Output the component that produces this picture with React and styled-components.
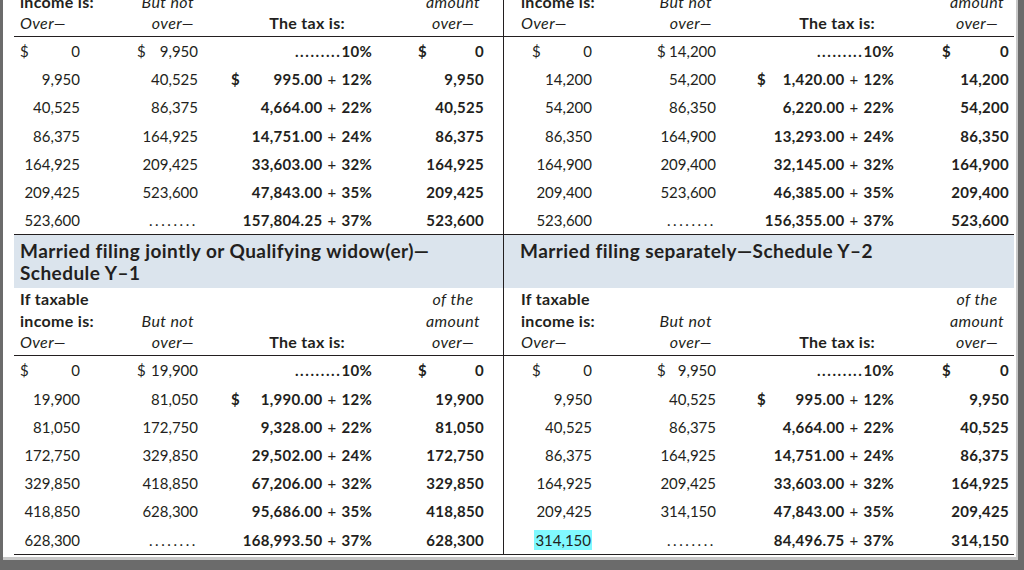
import styled, { createGlobalStyle } from "styled-components"

const GlobalStyle = createGlobalStyle`
  html, body {
    margin: 0;
    padding: 0;
    background: #6b6b6b;
    overflow: hidden;
  }
  body {
    font-family: Lato, "Open Sans", sans-serif;
    color: #231f20;
  }
`

const Page = styled.div`
  margin-left: 3px;
  width: 1015px;
  height: 560px;
  padding-left: 11px;
  box-sizing: border-box;
  background: #fff;
  border-right: 2px solid #c8c8c8;
  border-bottom: 3px solid #c8c8c8;
  overflow: hidden;
`

const Sheet = styled.div`
  display: flex;
  width: 1000px;
  margin-top: -84px;
`

const Panel = styled.div`
  display: flex;
  flex-direction: column;
  width: ${(p) => p.$width}px;
  border-right: ${(p) => (p.$divider ? "1px solid #231f20" : "none")};
`

const Band = styled.div`
  height: 53px;
  box-sizing: border-box;
  padding: 5px 6px 0 ${(p) => p.$pl}px;
  background: #dbe4ed;
  font-size: 19px;
  font-weight: 700;
  line-height: 22px;
  letter-spacing: 0.45px;
`

const Grid = styled.div`
  display: grid;
  grid-template-columns: ${(p) => p.$cols};
`

const Header = styled(Grid)`
  height: 67px;
  align-items: end;
  border-bottom: 1px solid #231f20;
  font-size: 16px;
  line-height: 21.5px;
`

const HeadCell = styled.div`
  display: flex;
  flex-direction: column;
  align-items: ${(p) => p.$align};
  text-align: ${(p) => p.$text};
  padding: 0 ${(p) => p.$pr}px 3px ${(p) => p.$pl}px;
  white-space: nowrap;
`

const Bold = styled.span`
  font-weight: 700;
  letter-spacing: 0.3px;
`

const Ital = styled.span`
  font-style: italic;
  letter-spacing: 0.4px;
`

const Body = styled.div`
  border-bottom: 1px solid #231f20;
`

const Row = styled(Grid)`
  height: 28.2px;
  align-items: center;
  font-size: 15px;
`

const Cell = styled.div`
  display: flex;
  justify-content: space-between;
  align-items: center;
  padding: 0 ${(p) => p.$pr}px 0 ${(p) => p.$pl}px;
  font-weight: ${(p) => (p.$bold ? 700 : 400)};
  letter-spacing: ${(p) => (p.$bold ? "0.3px" : "0")};
  white-space: nowrap;
`

const Plus = styled.span`
  font-weight: 400;
  margin: 0 5px;
`

const Dots = styled.span`
  letter-spacing: ${(p) => p.$gap}px;
`

const Mark = styled.span`
  background: #80f9ff;
  padding: 1px 1px;
`

const LEFT = {
  width: 490,
  divider: true,
  titlePl: 6,
  widths: [94, 106, 174, 115],
  cells: [
    { pl: 6, pr: 28 },
    { pl: 29, pr: 16 },
    { pl: 17, pr: 16 },
    { pl: 30, pr: 19 },
  ],
  head: [
    { pl: 6, pr: 0 },
    { pl: 0, pr: 20 },
    { pl: 0, pr: 43 },
    { pl: 17, pr: 2 },
  ],
}

const RIGHT = {
  width: 510,
  divider: false,
  titlePl: 16,
  widths: [116, 115, 171, 108],
  cells: [
    { pl: 28, pr: 28 },
    { pl: 37, pr: 19 },
    { pl: 22, pr: 12 },
    { pl: 36, pr: 5 },
  ],
  head: [
    { pl: 17, pr: 0 },
    { pl: 0, pr: 23 },
    { pl: 0, pr: 31 },
    { pl: 36, pr: 2 },
  ],
}

const schedules = [
  {
    left: {
      title: ["Single—Schedule X"],
      rows: [
        ["0", "9,950", "", "0"],
        ["9,950", "40,525", "995.00 + 12%", "9,950"],
        ["40,525", "86,375", "4,664.00 + 22%", "40,525"],
        ["86,375", "164,925", "14,751.00 + 24%", "86,375"],
        ["164,925", "209,425", "33,603.00 + 32%", "164,925"],
        ["209,425", "523,600", "47,843.00 + 35%", "209,425"],
        ["523,600", "", "157,804.25 + 37%", "523,600"],
      ],
    },
    right: {
      title: ["Head of household—Schedule Z"],
      rows: [
        ["0", "14,200", "", "0"],
        ["14,200", "54,200", "1,420.00 + 12%", "14,200"],
        ["54,200", "86,350", "6,220.00 + 22%", "54,200"],
        ["86,350", "164,900", "13,293.00 + 24%", "86,350"],
        ["164,900", "209,400", "32,145.00 + 32%", "164,900"],
        ["209,400", "523,600", "46,385.00 + 35%", "209,400"],
        ["523,600", "", "156,355.00 + 37%", "523,600"],
      ],
    },
  },
  {
    left: {
      title: ["Married filing jointly or Qualifying widow(er)—", "Schedule Y–1"],
      rows: [
        ["0", "19,900", "", "0"],
        ["19,900", "81,050", "1,990.00 + 12%", "19,900"],
        ["81,050", "172,750", "9,328.00 + 22%", "81,050"],
        ["172,750", "329,850", "29,502.00 + 24%", "172,750"],
        ["329,850", "418,850", "67,206.00 + 32%", "329,850"],
        ["418,850", "628,300", "95,686.00 + 35%", "418,850"],
        ["628,300", "", "168,993.50 + 37%", "628,300"],
      ],
    },
    right: {
      title: ["Married filing separately—Schedule Y–2"],
      highlight: true,
      rows: [
        ["0", "9,950", "", "0"],
        ["9,950", "40,525", "995.00 + 12%", "9,950"],
        ["40,525", "86,375", "4,664.00 + 22%", "40,525"],
        ["86,375", "164,925", "14,751.00 + 24%", "86,375"],
        ["164,925", "209,425", "33,603.00 + 32%", "164,925"],
        ["209,425", "314,150", "47,843.00 + 35%", "209,425"],
        ["314,150", "", "84,496.75 + 37%", "314,150"],
      ],
    },
  },
]

function Tax({ value }) {
  const [amount, rate] = value.split(" + ")
  return (
    <span>
      {amount}
      <Plus>+</Plus>
      {rate}
    </span>
  )
}

function TableHead({ layout, cols }) {
  const h = layout.head
  return (
    <Header $cols={cols}>
      <HeadCell $align="flex-start" $text="left" $pl={h[0].pl} $pr={h[0].pr}>
        <Bold>If taxable</Bold>
        <Bold>income is:</Bold>
        <Ital>Over—</Ital>
      </HeadCell>
      <HeadCell $align="flex-end" $text="right" $pl={h[1].pl} $pr={h[1].pr}>
        <Ital>But not</Ital>
        <Ital>over—</Ital>
      </HeadCell>
      <HeadCell $align="flex-end" $text="right" $pl={h[2].pl} $pr={h[2].pr}>
        <Bold>The tax is:</Bold>
      </HeadCell>
      <HeadCell $align="center" $text="center" $pl={h[3].pl} $pr={h[3].pr}>
        <Ital>of the</Ital>
        <Ital>amount</Ital>
        <Ital>over—</Ital>
      </HeadCell>
    </Header>
  )
}

function Schedule({ layout, data }) {
  const cols = layout.widths.map((w) => `${w}px`).join(" ")
  const c = layout.cells
  const last = data.rows.length - 1
  return (
    <>
      <Band $pl={layout.titlePl}>
        {data.title.map((t) => (
          <div key={t}>{t}</div>
        ))}
      </Band>
      <TableHead layout={layout} cols={cols} />
      <Body>
        {data.rows.map((r, i) => (
          <Row key={i} $cols={cols}>
            <Cell $pl={c[0].pl} $pr={c[0].pr}>
              <span>{i === 0 ? "$" : ""}</span>
              {data.highlight && i === last ? <Mark>{r[0]}</Mark> : <span>{r[0]}</span>}
            </Cell>
            <Cell $pl={c[1].pl} $pr={c[1].pr}>
              <span>{i === 0 ? "$" : ""}</span>
              {r[1] ? <span>{r[1]}</span> : <Dots $gap={2.6}>........</Dots>}
            </Cell>
            <Cell $pl={c[2].pl} $pr={c[2].pr} $bold>
              <span>{i === 1 ? "$" : ""}</span>
              {r[2] ? (
                <Tax value={r[2]} />
              ) : (
                <span>
                  <Dots $gap={1.6}>.........</Dots>10%
                </span>
              )}
            </Cell>
            <Cell $pl={c[3].pl} $pr={c[3].pr} $bold>
              <span>{i === 0 ? "$" : ""}</span>
              <span>{r[3]}</span>
            </Cell>
          </Row>
        ))}
      </Body>
    </>
  )
}

export default function App() {
  return (
    <>
      <GlobalStyle />
      <Page>
        <Sheet>
          <Panel $width={LEFT.width} $divider={LEFT.divider}>
            {schedules.map((s, i) => (
              <Schedule key={i} layout={LEFT} data={s.left} />
            ))}
          </Panel>
          <Panel $width={RIGHT.width}>
            {schedules.map((s, i) => (
              <Schedule key={i} layout={RIGHT} data={s.right} />
            ))}
          </Panel>
        </Sheet>
      </Page>
    </>
  )
}
